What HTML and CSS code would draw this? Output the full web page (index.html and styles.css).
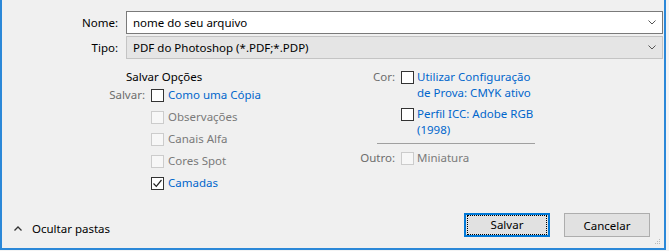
FILE: index.html
```html
<!DOCTYPE html>
<html lang="pt">
<head>
  <meta charset="UTF-8" />
  <title>Salvar como</title>
  <link rel="stylesheet" href="styles.css">
</head>
<body>

<div class="window">
  <div class="fields">
    <label class="field-label">Nome:</label>
    <div class="combo combo-edit">
      <span class="combo-text">nome do seu arquivo</span>
      <svg class="chev" width="8" height="5" viewBox="0 0 8 5"><path d="M0.5 0.5 L4 4 L7.5 0.5" fill="none" stroke="#555" stroke-width="1"/></svg>
    </div>
    <label class="field-label">Tipo:</label>
    <div class="combo combo-list">
      <span class="combo-text">PDF do Photoshop (*.PDF;*.PDP)</span>
      <svg class="chev" width="8" height="5" viewBox="0 0 8 5"><path d="M0.5 0.5 L4 4 L7.5 0.5" fill="none" stroke="#555" stroke-width="1"/></svg>
    </div>
  </div>

  <div class="options">
    <div class="col-left">
      <div class="group-title">Salvar Opções</div>
      <div class="opt-grid left-grid">
        <span class="opt-label">Salvar:</span>
        <span class="box"></span>
        <span class="opt-text">Como uma Cópia</span>

        <span></span>
        <span class="box off"></span>
        <span class="opt-text dim">Observações</span>

        <span></span>
        <span class="box off"></span>
        <span class="opt-text dim">Canais Alfa</span>

        <span></span>
        <span class="box off"></span>
        <span class="opt-text dim">Cores Spot</span>

        <span></span>
        <span class="box checked">
          <svg width="11" height="11" viewBox="0 0 11 11"><path d="M1.5 5.5 L4.3 8.3 L9.5 2" fill="none" stroke="#222" stroke-width="1.2"/></svg>
        </span>
        <span class="opt-text">Camadas</span>
      </div>
    </div>

    <div class="col-right">
      <div class="opt-grid right-grid">
        <span class="opt-label">Cor:</span>
        <span class="box"></span>
        <span class="opt-text wrap">Utilizar Configuração de Prova: CMYK ativo</span>

        <span></span>
        <span class="box"></span>
        <span class="opt-text wrap">Perfil ICC: Adobe RGB (1998)</span>
      </div>
      <div class="separator"></div>
      <div class="opt-grid right-grid">
        <span class="opt-label">Outro:</span>
        <span class="box off"></span>
        <span class="opt-text dim">Miniatura</span>
      </div>
    </div>
  </div>

  <div class="footer">
    <div class="toggle">
      <svg width="8" height="5" viewBox="0 0 8 5"><path d="M0.5 4.5 L4 1 L7.5 4.5" fill="none" stroke="#333" stroke-width="1.3"/></svg>
      <span>Ocultar pastas</span>
    </div>
    <div class="buttons">
      <button class="btn primary"><span>Salvar</span></button>
      <button class="btn">Cancelar</button>
    </div>
    <svg class="grip" width="7" height="7" viewBox="0 0 7 7">
      <rect x="5" y="1" width="1" height="1" fill="#bbb"/>
      <rect x="3" y="3" width="1" height="1" fill="#bbb"/>
      <rect x="5" y="3" width="1" height="1" fill="#bbb"/>
      <rect x="1" y="5" width="1" height="1" fill="#bbb"/>
      <rect x="3" y="5" width="1" height="1" fill="#bbb"/>
      <rect x="5" y="5" width="1" height="1" fill="#bbb"/>
    </svg>
  </div>
</div>

</body>
</html>
```

FILE: styles.css
```css
body {
  margin: 0;
  background: #f4f4f4;
  font-family: "Noto Sans", "Segoe UI", sans-serif;
  font-size: 11.5px;
  color: #000;
}
.window {
  position: relative;
  width: 662px;
  height: 248px;
  background: #f0f0f0;
  border-left: 2px solid #2b88d8;
  border-right: 2px solid #2b88d8;
  border-bottom: 2px solid #2b88d8;
  display: flex;
  flex-direction: column;
}
.fields {
  display: grid;
  grid-template-columns: 116px 1fr;
  column-gap: 8px;
  row-gap: 2px;
  margin-top: 11px;
  padding-right: 1px;
}
.field-label {
  text-align: right;
  line-height: 23px;
}
.combo {
  height: 21px;
  display: flex;
  align-items: center;
  justify-content: space-between;
  padding: 0 6px 0 6px;
}
.combo-edit {
  background: #fff;
  border: 1px solid #7a7a7a;
}
.combo-list {
  background: #e5e5e5;
  border: 1px solid #c4c4c4;
}
.combo-text {
  line-height: 21px;
}
.chev {
  display: block;
}
.options {
  display: flex;
  margin-top: 10px;
  padding-left: 98px;
}
.col-left {
  width: 260px;
}
.group-title {
  padding-left: 26px;
  line-height: 16px;
  margin-bottom: 2px;
}
.opt-grid {
  display: grid;
  align-items: start;
}
.left-grid {
  grid-template-columns: 45px 13px auto;
  column-gap: 6px;
  grid-auto-rows: 22px;
}
.left-grid .opt-text {
  margin-left: -2px;
}
.right-grid {
  grid-template-columns: 35px 13px 122px;
  column-gap: 6px;
  row-gap: 5px;
}
.right-grid .opt-text {
  margin-left: -3px;
}
.opt-label {
  text-align: right;
  color: #6d6d6d;
  line-height: 16px;
}
.opt-text {
  color: #0066cc;
  line-height: 16px;
  white-space: nowrap;
}
.opt-text.wrap {
  white-space: normal;
}
.opt-text.dim {
  color: #7a7a7a;
}
.box {
  width: 11px;
  height: 11px;
  margin-top: 2px;
  border: 1px solid #333;
  background: #fff;
  display: flex;
  align-items: center;
  justify-content: center;
}
.box.off {
  border-color: #cccccc;
  background: #f7f7f7;
}
.box svg {
  display: block;
}
.separator {
  width: 158px;
  height: 1px;
  margin: 5px 0 6px 17px;
  background: #a0a0a0;
}
.footer {
  margin-top: auto;
  display: flex;
  align-items: center;
  justify-content: space-between;
  padding: 0 14px 11px 12px;
}
.toggle {
  display: flex;
  align-items: center;
  gap: 10px;
  margin-top: 6px;
}
.toggle svg {
  display: block;
}
.buttons {
  display: flex;
  gap: 14px;
}
.btn {
  width: 86px;
  height: 24px;
  font-family: inherit;
  font-size: 11.5px;
  color: #000;
  background: #e1e1e1;
  border: 1px solid #adadad;
  padding: 0;
}
.btn.primary {
  border: 2px solid #0078d7;
  padding: 1px;
}
.btn.primary span {
  display: block;
  height: 16px;
  line-height: 16px;
  outline: 1px dotted #000;
  outline-offset: 0;
  margin: 0 1px;
  padding: 1px 0;
}
.grip {
  position: absolute;
  right: 3px;
  bottom: 3px;
}
```
